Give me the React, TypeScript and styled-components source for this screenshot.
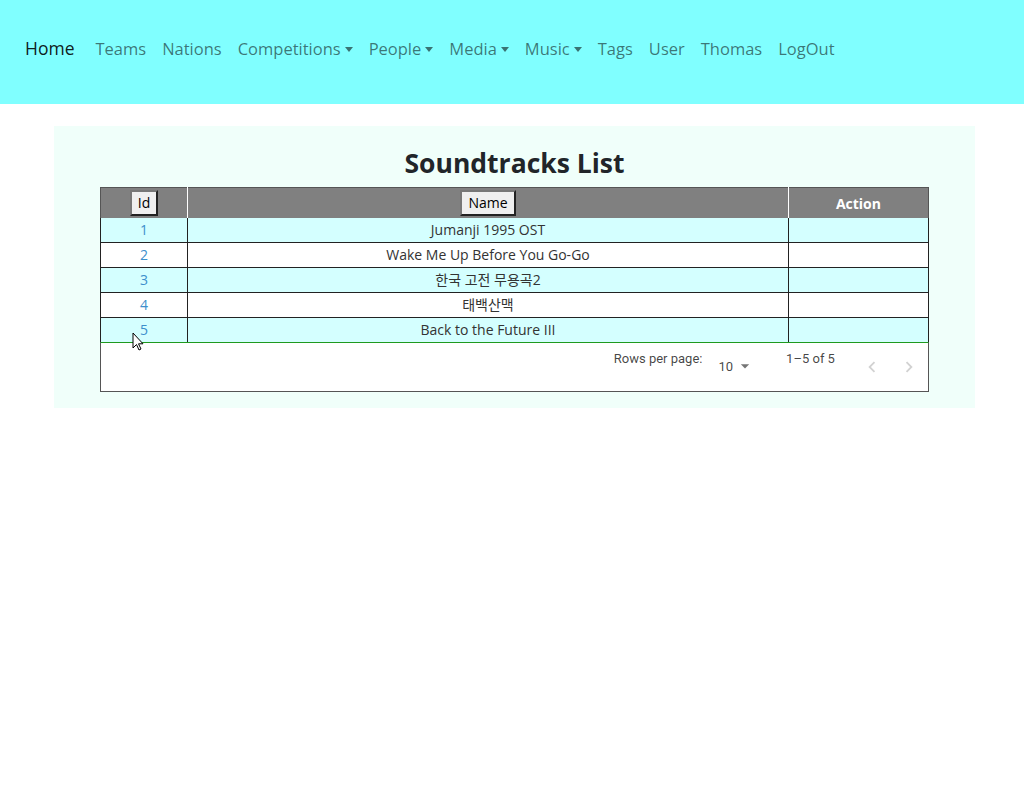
import styled, { createGlobalStyle } from 'styled-components';

const GlobalStyle = createGlobalStyle`
  body {
    margin: 0;
    background: #ffffff;
    font-family: "Open Sans", "Noto Sans CJK KR", sans-serif;
    color: #212529;
  }
`;

type Track = { id: number; name: string };

const tracks: Track[] = [
  { id: 1, name: 'Jumanji 1995 OST' },
  { id: 2, name: 'Wake Me Up Before You Go-Go' },
  { id: 3, name: '한국 고전 무용곡2' },
  { id: 4, name: '태백산맥' },
  { id: 5, name: 'Back to the Future III' },
];

const navItems = [
  { label: 'Teams' },
  { label: 'Nations' },
  { label: 'Competitions', dropdown: true },
  { label: 'People', dropdown: true },
  { label: 'Media', dropdown: true },
  { label: 'Music', dropdown: true },
  { label: 'Tags' },
  { label: 'User' },
  { label: 'Thomas' },
  { label: 'LogOut' },
];

export default function App() {
  return (
    <>
      <GlobalStyle />
      <NavBar>
        <Brand>Home</Brand>
        <NavList>
          {navItems.map((item) => (
            <NavLink key={item.label} $dropdown={item.dropdown}>
              {item.label}
            </NavLink>
          ))}
        </NavList>
      </NavBar>
      <Panel>
        <Title>Soundtracks List</Title>
        <TableWrap>
          <Table>
            <colgroup>
              <col style={{ width: 87 }} />
              <col />
              <col style={{ width: 140 }} />
            </colgroup>
            <thead>
              <tr>
                <HeadCell><SortButton>Id</SortButton></HeadCell>
                <HeadCell><SortButton>Name</SortButton></HeadCell>
                <HeadCell>Action</HeadCell>
              </tr>
            </thead>
            <tbody>
              {tracks.map((t, i) => (
                <Row key={t.id} $odd={i % 2 === 0} $last={i === tracks.length - 1}>
                  <IdCell>{t.id}</IdCell>
                  <Cell>{t.name}</Cell>
                  <Cell />
                </Row>
              ))}
            </tbody>
          </Table>
          <Pagination>
            <PageLabel>Rows per page:</PageLabel>
            <PerPage>
              10
              <Caret viewBox="0 0 24 24"><path d="M7 10l5 5 5-5z" /></Caret>
            </PerPage>
            <PageRange>1–5 of 5</PageRange>
            <PageButton aria-label="previous">
              <svg viewBox="0 0 24 24" width="22" height="22"><path d="M15.41 7.41 14 6l-6 6 6 6 1.41-1.41L10.83 12z" /></svg>
            </PageButton>
            <PageButton aria-label="next">
              <svg viewBox="0 0 24 24" width="22" height="22"><path d="M10 6 8.59 7.41 13.17 12l-4.58 4.59L10 18l6-6z" /></svg>
            </PageButton>
          </Pagination>
          <Pointer viewBox="0 0 12 19">
            <path d="M1 1v15l3.5-3.5 2.5 5.5 2-1-2.5-5.2H11z" fill="#fff" stroke="#000" strokeWidth="1" />
          </Pointer>
        </TableWrap>
      </Panel>
    </>
  );
}

const NavBar = styled.nav`
  height: 104px;
  box-sizing: border-box;
  background: #80ffff;
  display: flex;
  align-items: center;
  padding: 0 0 8px 25px;
`;

const Brand = styled.a`
  font-size: 17.5px;
  color: rgba(0, 0, 0, 0.9);
  margin-right: 13px;
`;

const NavList = styled.div`
  display: flex;
  align-items: center;
`;

const NavLink = styled.a<{ $dropdown?: boolean }>`
  font-size: 16.5px;
  color: rgba(0, 0, 0, 0.55);
  padding: 0 8px;
  cursor: pointer;

  ${({ $dropdown }) =>
    $dropdown &&
    `
    &::after {
      content: '';
      display: inline-block;
      margin-left: 4px;
      vertical-align: 3px;
      border-top: 5px solid;
      border-left: 4.5px solid transparent;
      border-right: 4.5px solid transparent;
    }
  `}
`;

const Panel = styled.main`
  width: 921px;
  margin: 22px 0 0 54px;
  padding: 19px 0 16px;
  box-sizing: border-box;
  background: #f0fffa;
`;

const Title = styled.h2`
  margin: 0 0 6px;
  font-size: 26.5px;
  line-height: 36px;
  font-weight: 700;
  text-align: center;
  color: #212529;
`;

const TableWrap = styled.div`
  position: relative;
  width: 90%;
  margin: 0 auto;
`;

const Table = styled.table`
  width: 100%;
  border-collapse: collapse;
  border: 1px solid #555;
  border-bottom: 0;
  font-size: 14px;
`;

const HeadCell = styled.th`
  height: 30px;
  padding: 0;
  background: #808080;
  color: #fff;
  font-weight: 700;
  font-size: 14px;
  text-align: center;
  border-left: 1px solid #fff;

  &:first-child {
    border-left: 1px solid #555;
  }
`;

const SortButton = styled.button`
  font-family: "Open Sans", sans-serif;
  font-size: 14px;
  color: #000;
  background: #efefef;
  border: 2px solid #222;
  border-top-color: #777;
  border-left-color: #777;
  height: 26px;
  padding: 0 6px;
  line-height: 20px;
`;

const Row = styled.tr<{ $odd: boolean; $last: boolean }>`
  background: ${({ $odd }) => ($odd ? '#d4ffff' : '#ffffff')};

  td {
    border-bottom: ${({ $last }) => ($last ? '0' : '1px solid #222')};
  }
`;

const Cell = styled.td`
  height: 24px;
  padding: 0;
  text-align: center;
  color: #333;
  border-left: 1px solid #222;
  border-right: 1px solid #222;
  line-height: 24px;
`;

const IdCell = styled(Cell)`
  color: #3d8fcc;
`;

const Pagination = styled.div`
  height: 50px;
  box-sizing: border-box;
  background: #fff;
  border-top: 1px solid #1f9a1f;
  border-left: 1px solid #555;
  border-right: 1px solid #555;
  border-bottom: 1px solid #555;
  display: flex;
  justify-content: flex-end;
  align-items: flex-start;
  font-family: Roboto, sans-serif;
  font-size: 13px;
  color: rgba(0, 0, 0, 0.74);
`;

const PageLabel = styled.span`
  margin-top: 8px;
  margin-right: 16px;
`;

const PerPage = styled.span`
  display: flex;
  align-items: center;
  margin-top: 13px;
  margin-right: 31px;
`;

const Caret = styled.svg`
  width: 20px;
  height: 20px;
  fill: rgba(0, 0, 0, 0.54);
  margin-left: 2px;
`;

const PageRange = styled.span`
  margin-top: 8px;
  margin-right: 19px;
`;

const PageButton = styled.button`
  width: 37px;
  height: 36px;
  margin-top: 6px;
  padding: 0;
  border: none;
  background: transparent;
  display: flex;
  align-items: center;
  justify-content: center;

  svg {
    fill: rgba(0, 0, 0, 0.18);
  }
`;

const Pointer = styled.svg`
  position: absolute;
  left: 32px;
  top: 145px;
  width: 12px;
  height: 19px;
`;
